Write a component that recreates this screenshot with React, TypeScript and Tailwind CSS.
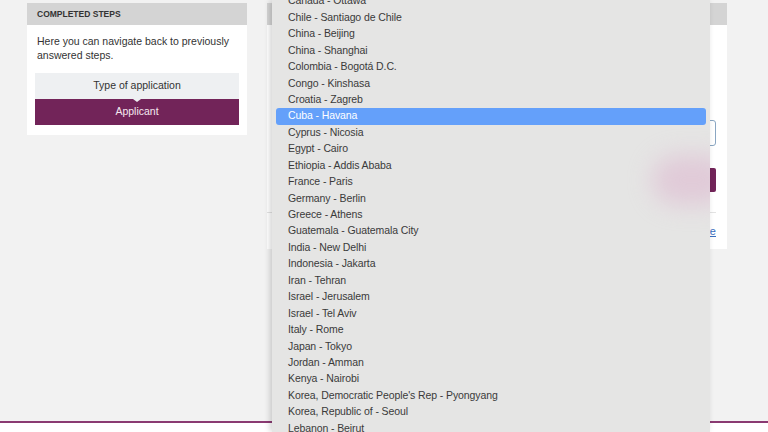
import { useState } from 'react'

const options = [
  'Canada - Ottawa',
  'Chile - Santiago de Chile',
  'China - Beijing',
  'China - Shanghai',
  'Colombia - Bogotá D.C.',
  'Congo - Kinshasa',
  'Croatia - Zagreb',
  'Cuba - Havana',
  'Cyprus - Nicosia',
  'Egypt - Cairo',
  'Ethiopia - Addis Ababa',
  'France - Paris',
  'Germany - Berlin',
  'Greece - Athens',
  'Guatemala - Guatemala City',
  'India - New Delhi',
  'Indonesia - Jakarta',
  'Iran - Tehran',
  'Israel - Jerusalem',
  'Israel - Tel Aviv',
  'Italy - Rome',
  'Japan - Tokyo',
  'Jordan - Amman',
  'Kenya - Nairobi',
  "Korea, Democratic People's Rep - Pyongyang",
  'Korea, Republic of - Seoul',
  'Lebanon - Beirut',
]

function CompletedSteps() {
  return (
    <div className="w-[220px] shrink-0 bg-white">
      <div className="flex h-[22px] items-center bg-[#d4d4d4] px-[10px] text-[8.5px] font-bold uppercase text-[#333]">
        Completed steps
      </div>
      <div className="px-[8px] pt-[9px] pb-[10px]">
        <p className="px-[2px] text-[10.5px] leading-[14px] text-[#333]">
          Here you can navigate back to previously answered steps.
        </p>
        <div className="mt-[11px] flex flex-col">
          <button
            className="relative flex h-[26px] items-center justify-center bg-[#eef0f2] text-[10.5px] text-[#333]"
            type="button"
          >
            Type of application
            <span className="absolute top-full left-1/2 z-10 h-0 w-0 -translate-x-1/2 border-x-[4px] border-t-[3px] border-x-transparent border-t-[#eef0f2]" />
          </button>
          <button
            className="flex h-[26px] items-center justify-center bg-[#722459] text-[10.5px] text-[#f4e8ef]"
            type="button"
          >
            Applicant
          </button>
        </div>
      </div>
    </div>
  )
}

function ApplicantForm() {
  return (
    <div className="flex h-[246px] w-[460px] flex-col bg-white">
      <div className="h-[22px] bg-[#d4d4d4]" />
      <div className="flex flex-1 flex-col items-end pr-[11px]">
        <div className="mt-[95px] h-[26px] w-[200px] rounded-[3px] border border-[#8aa6c2]" />
        <div className="mt-[22px] h-[24px] w-[120px] rounded-[2px] bg-[#722459]" />
        <div className="mt-[20px] h-px w-full bg-[#e3e3e3]" />
        <span className="mt-[11px] text-[11px] leading-[14px] text-[#3b6fbf] underline">Change</span>
      </div>
    </div>
  )
}

function SelectPopup() {
  const [selected] = useState('Cuba - Havana')
  return (
    <div className="absolute top-0 left-[272px] h-[432px] w-[438px] overflow-hidden bg-[#e5e5e4] shadow-[-2px_0_6px_rgba(0,0,0,0.18)]">
      <ul
        className="mt-[-7px] px-[4px]"
        style={{ fontFamily: '"Liberation Sans", Arial, sans-serif' }}
      >
        {options.map((o) => (
          <li
            className={
              o === selected
                ? 'flex h-[16.45px] items-center rounded-[3px] bg-[#64a0fa] pl-[12px] text-[10.5px] tracking-[-0.1px] text-white'
                : 'flex h-[16.45px] items-center pl-[12px] text-[10.5px] tracking-[-0.1px] text-[#3a3a3a]'
            }
            key={o}
          >
            {o}
          </li>
        ))}
      </ul>
      {/* focus glow of the button behind the popup */}
      <div className="pointer-events-none absolute top-[155px] left-[380px] h-[50px] w-[80px] rounded-full bg-[#dcb0cc] opacity-50 blur-[12px]" />
    </div>
  )
}

export default function App() {
  return (
    <div
      className="relative flex h-[432px] w-[768px] flex-col overflow-hidden bg-[#f2f2f2]"
      style={{ fontFamily: '"Liberation Sans", Arial, sans-serif' }}
    >
      <div className="flex flex-1 items-start gap-[20px] pt-[3px] pl-[27px]">
        <CompletedSteps />
        <ApplicantForm />
      </div>
      <div className="h-[2px] bg-[#8a3a72]" />
      <div className="h-[9px] bg-white" />
      <SelectPopup />
    </div>
  )
}
